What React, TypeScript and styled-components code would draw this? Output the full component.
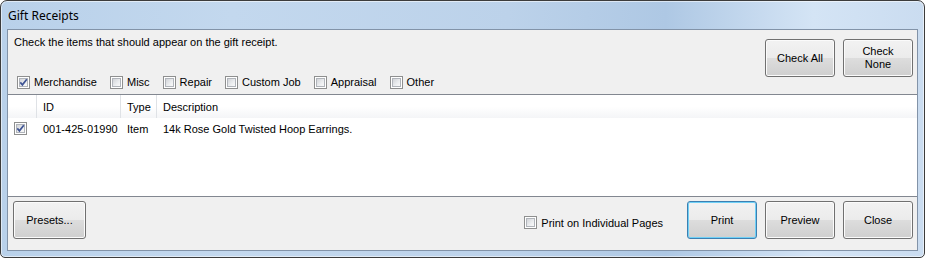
import styled, { createGlobalStyle } from 'styled-components';

const GlobalStyle = createGlobalStyle`
  html, body {
    margin: 0;
    padding: 0;
    background: #ffffff;
  }
  body {
    font-family: "Liberation Sans", Arial, sans-serif;
    font-size: 11px;
    color: #000;
  }
`;

const Window = styled.div`
  width: 925px;
  height: 258px;
  box-sizing: border-box;
  display: flex;
  flex-direction: column;
  border: 1px solid #3c3c3c;
  border-radius: 7px 7px 5px 5px;
  overflow: hidden;
  background: linear-gradient(
    90deg,
    #b9d1ea 0%,
    #c3d8ee 25%,
    #bcd2ea 55%,
    #aec8e4 72%,
    #d4e4f5 88%,
    #cadcf0 100%
  );
  box-shadow: inset 0 0 0 1px rgba(255, 255, 255, 0.55);
`;

const TitleBar = styled.div`
  height: 28px;
  flex: none;
  display: flex;
  align-items: center;
  padding-left: 7px;
  font-family: "Noto Sans", "Open Sans", sans-serif;
  font-size: 12px;
  color: #000;
`;

const Client = styled.div`
  flex: 1;
  margin: 0 6px 6px;
  border: 1px solid #8293a8;
  background: #f0f0f0;
  display: flex;
  flex-direction: column;
`;

const TopPanel = styled.div`
  height: 64px;
  flex: none;
  display: flex;
  justify-content: space-between;
  padding: 0 4px 0 6px;
`;

const Intro = styled.div`
  display: flex;
  flex-direction: column;
  justify-content: space-between;
  padding: 6px 0 4px;
  line-height: 13px;
`;

const Filters = styled.div`
  display: flex;
  align-items: center;
  gap: 13px;
  height: 15px;
  margin-left: 3px;
`;

const Option = styled.label`
  display: flex;
  align-items: center;
  gap: 4px;
  height: 15px;
  white-space: nowrap;
`;

const Box = styled.span`
  position: relative;
  flex: none;
  width: 13px;
  height: 13px;
  box-sizing: border-box;
  border: 1px solid #8e8f8f;
  background: #fff;

  &::after {
    content: '';
    position: absolute;
    inset: 1px;
    border: 1px solid #b0b4ba;
    background: linear-gradient(135deg, #d2d4d8 0%, #eceef0 60%, #f9f9f9 100%);
  }

  svg {
    position: absolute;
    left: 0;
    top: 0;
    z-index: 1;
  }
`;

const Actions = styled.div`
  display: flex;
  align-items: flex-start;
  gap: 8px;
  padding-top: 9px;
`;

const Button = styled.button<{ $w?: number; $default?: boolean }>`
  width: ${(p) => p.$w ?? 70}px;
  height: 38px;
  box-sizing: border-box;
  padding: 0;
  font-family: "Liberation Sans", Arial, sans-serif;
  font-size: 11px;
  line-height: 13px;
  color: #000;
  border-radius: 3px;
  border: 1px solid ${(p) => (p.$default ? '#3c7fb1' : '#707070')};
  background: linear-gradient(
    to bottom,
    #f2f2f2 0%,
    #ebebeb 50%,
    #dddddd 50%,
    #cfcfcf 100%
  );
  box-shadow: inset 0 0 0 1px ${(p) => (p.$default ? '#6fd0f6' : '#fbfbfb')};
  text-align: center;
`;

const List = styled.div`
  height: 103px;
  flex: none;
  box-sizing: border-box;
  border-top: 1px solid #828790;
  border-bottom: 1px solid #828790;
  background: #fff;
`;

const Columns = styled.div`
  display: grid;
  grid-template-columns: 29px 84px 36px 1fr;
`;

const Header = styled(Columns)`
  height: 23px;
  background: linear-gradient(to bottom, #ffffff 0%, #ffffff 50%, #f4f5f7 100%);
`;

const HeaderCell = styled.div`
  display: flex;
  align-items: center;
  padding-left: 6px;
  border-right: 1px solid #dfe2e6;
  &:last-child {
    border-right: none;
  }
`;

const Row = styled(Columns)`
  height: 21px;
  align-items: center;
`;

const Cell = styled.div`
  display: flex;
  align-items: center;
  padding-left: 6px;
  white-space: nowrap;
`;

const BottomPanel = styled.div`
  flex: 1;
  display: flex;
  align-items: flex-start;
  gap: 8px;
  padding: 4px 4px 0 5px;
`;

const Spacer = styled.div`
  flex: 1;
`;

const PrintOption = styled(Option)`
  margin-top: 14px;
  margin-right: 16px;
`;

function CheckBox({ checked }: { checked?: boolean }) {
  return (
    <Box>
      {checked && (
        <svg width="11" height="11" viewBox="0 0 11 11">
          <path d="M2.3 5.4 L4.4 7.8 L8.8 2.2" fill="none" stroke="#3f5494" strokeWidth="1.7" />
        </svg>
      )}
    </Box>
  );
}

const filters = [
  { name: 'Merchandise', checked: true },
  { name: 'Misc' },
  { name: 'Repair' },
  { name: 'Custom Job' },
  { name: 'Appraisal' },
  { name: 'Other' },
];

export default function App() {
  return (
    <>
      <GlobalStyle />
      <Window>
        <TitleBar>Gift Receipts</TitleBar>
        <Client>
          <TopPanel>
            <Intro>
              <div>Check the items that should appear on the gift receipt.</div>
              <Filters>
                {filters.map((f) => (
                  <Option key={f.name}>
                    <CheckBox checked={f.checked} />
                    {f.name}
                  </Option>
                ))}
              </Filters>
            </Intro>
            <Actions>
              <Button>Check All</Button>
              <Button>
                Check
                <br />
                None
              </Button>
            </Actions>
          </TopPanel>
          <List>
            <Header>
              <HeaderCell />
              <HeaderCell>ID</HeaderCell>
              <HeaderCell>Type</HeaderCell>
              <HeaderCell>Description</HeaderCell>
            </Header>
            <Row>
              <Cell>
                <CheckBox checked />
              </Cell>
              <Cell>001-425-01990</Cell>
              <Cell>Item</Cell>
              <Cell>14k Rose Gold Twisted Hoop Earrings.</Cell>
            </Row>
          </List>
          <BottomPanel>
            <Button $w={73}>Presets...</Button>
            <Spacer />
            <PrintOption>
              <CheckBox />
              Print on Individual Pages
            </PrintOption>
            <Button $default>Print</Button>
            <Button>Preview</Button>
            <Button>Close</Button>
          </BottomPanel>
        </Client>
      </Window>
    </>
  );
}
